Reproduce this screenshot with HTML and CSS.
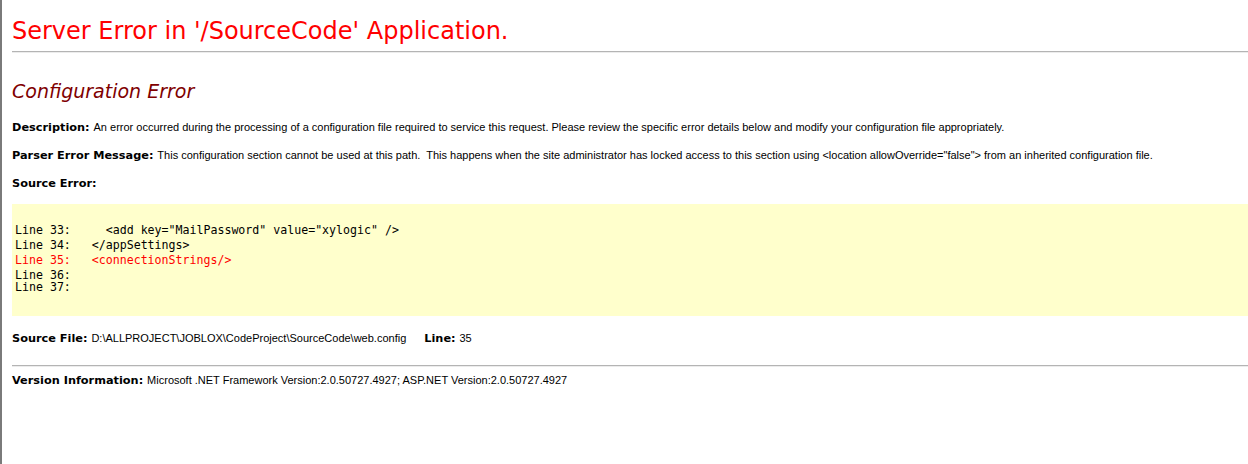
FILE: index.html
```html
<!DOCTYPE html>
<html>
<head>
<meta charset="utf-8">
<title>Configuration Error</title>
<link rel="stylesheet" href="styles.css">
</head>
<body>
<h1>Server Error in '/SourceCode' Application.</h1>
<hr class="rule">

<h2>Configuration Error</h2>

<p class="row"><b>Description: </b>An error occurred during the processing of a configuration file required to service this request. Please review the specific error details below and modify your configuration file appropriately.</p>

<p class="row"><b>Parser Error Message: </b>This configuration section cannot be used at this path.&nbsp; This happens when the site administrator has locked access to this section using &lt;location allowOverride="false"&gt; from an inherited configuration file.</p>

<p class="row"><b>Source Error:</b></p>

<div class="source">
<div class="ln">Line 33:     &lt;add key="MailPassword" value="xylogic" /&gt;</div>
<div class="ln">Line 34:   &lt;/appSettings&gt;</div>
<div class="ln err">Line 35:   &lt;connectionStrings/&gt;</div>
<div class="ln short">Line 36: </div>
<div class="ln short">Line 37: </div>
</div>

<p class="row file"><b>Source File: </b>D:\ALLPROJECT\JOBLOX\CodeProject\SourceCode\web.config<span class="gap"></span><b>Line: </b>35</p>

<hr class="rule">

<p class="row version"><b>Version Information: </b>Microsoft .NET Framework Version:2.0.50727.4927; ASP.NET Version:2.0.50727.4927</p>
</body>
</html>
```

FILE: styles.css
```css
html {
	border-left: 2px solid #7a7a7a;
	background: #FFFFFF;
	min-height: 100%;
}
body {
	margin: 0;
	padding: 0 0 0 10px;
	font-family: 'Liberation Sans', Arial, sans-serif;
	font-size: 11px;
	color: #000000;
}
h1 {
	font-family: 'DejaVu Sans', Verdana, sans-serif;
	font-weight: normal;
	font-size: 24px;
	line-height: 30px;
	color: #FF0000;
	margin: 16px 0 5px 0;
}
h2 {
	font-family: 'DejaVu Sans', Verdana, sans-serif;
	font-weight: normal;
	font-style: italic;
	font-size: 19px;
	line-height: 24px;
	color: #800000;
	margin: 26px 0 17px 0;
}
.rule {
	height: 0;
	margin: 0;
	border: 0;
	border-top: 1px solid #b4b4b4;
	border-bottom: 1px solid #ececec;
}
.row {
	margin: 0 0 13px 0;
	line-height: 14px;
	white-space: nowrap;
}
.row b {
	font-family: 'DejaVu Sans', Verdana, sans-serif;
	font-weight: bold;
	font-size: 11.3px;
}
.source {
	background: #FFFFCC;
	margin: 0;
	padding: 19px 3px 24px 3px;
	font-family: 'DejaVu Sans Mono', monospace;
	font-size: 11.6px;
}
.ln {
	white-space: pre;
	line-height: 15px;
	height: 15px;
}
.ln.short {
	height: 12px;
}
.err {
	color: #FF0000;
}
.file {
	margin: 15px 0 19px 0;
}
.gap {
	display: inline-block;
	width: 18px;
}
.version {
	margin-top: 6px;
}
```
